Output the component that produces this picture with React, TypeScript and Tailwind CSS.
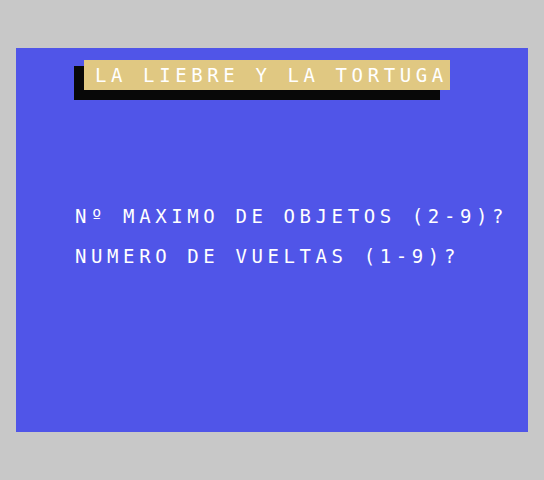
import React from 'react';

const mono = { fontFamily: '"DejaVu Sans Mono", "Liberation Mono", monospace' };

export default function App() {
  return (
    <div className="w-[544px] h-[480px] bg-[#c8c8c8] pt-[48px] pl-[16px]">
      <div className="w-[512px] h-[384px] bg-[#5055e8] text-white font-normal" style={mono}>
        <div className="pl-[68px] pt-[12px]">
          <div className="relative w-[366px] h-[30px]">
            <div className="absolute left-[-10px] top-[6px] w-[366px] h-[34px] bg-[#080808]" />
            <div className="relative h-[30px] bg-[#e0c882] pl-[11px] pt-[7px] text-[19px] leading-[16px] tracking-[4.6px] whitespace-pre">
              LA LIEBRE Y LA TORTUGA
            </div>
          </div>
        </div>
        <div className="mt-[118px] pl-[59px] flex flex-col gap-[24px] text-[19px] leading-[16px] tracking-[4.6px] whitespace-pre">
          <div>Nº MAXIMO DE OBJETOS (2-9)?</div>
          <div>NUMERO DE VUELTAS (1-9)?</div>
        </div>
      </div>
    </div>
  );
}
